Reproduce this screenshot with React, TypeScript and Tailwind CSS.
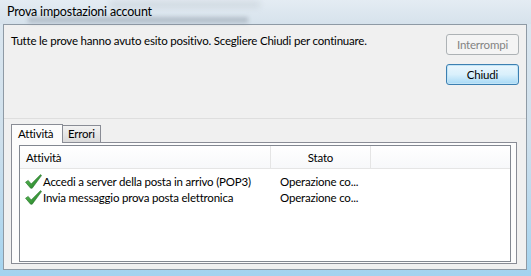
// Vista-style "Prova impostazioni account" dialog

const font = { fontFamily: 'Lato, "Noto Sans", sans-serif' };

type Row = { task: string; status: string };

const rows: Row[] = [
  { task: 'Accedi a server della posta in arrivo (POP3)', status: 'Operazione co...' },
  { task: 'Invia messaggio prova posta elettronica', status: 'Operazione co...' },
];

function Check() {
  return (
    <svg width="17" height="15" viewBox="0 0 17 15" className="shrink-0">
      <defs>
        <linearGradient id="ck" x1="0" y1="0" x2="1" y2="1">
          <stop offset="0" stopColor="#5fc35a" />
          <stop offset="1" stopColor="#1f7a22" />
        </linearGradient>
      </defs>
      <path d="M0.5 8.2 L3.2 6.4 L6.2 10 L15.6 0.6 L16.5 1.6 L7.2 14.2 L5.6 14.2 Z" fill="url(#ck)" stroke="#25702a" strokeWidth="0.6" />
    </svg>
  );
}

function WinButton({ label, disabled, primary }: { label: string; disabled?: boolean; primary?: boolean }) {
  return (
    <button
      className={`w-[73px] h-[21px] rounded-[3px] text-[11.5px] tracking-[-0.2px] leading-none flex items-center justify-center ${
        disabled
          ? 'border border-[#adb2b5] bg-[#f4f4f4] text-[#838383]'
          : primary
          ? 'border border-[#3c7fb1] bg-gradient-to-b from-[#eaf6fd] via-[#d9f0fc] to-[#a7d9f5] text-black shadow-[inset_0_0_0_1px_#c2e4f6]'
          : 'border border-[#707070] bg-gradient-to-b from-[#f2f2f2] to-[#d0d0d0] text-black'
      }`}
      style={font}
    >
      {label}
    </button>
  );
}

export default function App() {
  return (
    <div className="w-[531px] h-[276px] flex flex-col bg-gradient-to-b from-[#dce7f0] via-[#cfe0ec] to-[#a3d3ef] overflow-hidden text-[11.5px] tracking-[-0.2px]" style={font}>
      {/* Title bar */}
      <div className="relative h-[24px] shrink-0 px-[7px] flex items-center bg-gradient-to-b from-[#e4ecf3] to-[#d6e2ec]">
        <div className="absolute left-[28px] top-[17px] w-[220px] h-[6px] bg-[#7d8793]/40 blur-[2px]" />
        <div className="absolute left-[110px] top-[2px] w-[150px] h-[5px] bg-[#9aa6b1]/30 blur-[3px]" />
        <span className="relative text-[12.5px] text-black leading-none pt-[1px]">Prova impostazioni account</span>
      </div>

      {/* Client */}
      <div className="flex-1 flex pl-[3px] pr-[4px] pb-[6px]">
        <div className="flex-1 flex flex-col border border-[#8e9aa5] bg-[#f0f0f0]">
          {/* Top area */}
          <div className="h-[94px] shrink-0 flex pl-[7px] pr-[7px] border-b border-[#dedede]">
            <p className="flex-1 text-black pt-[8px] leading-[16px]">
              Tutte le prove hanno avuto esito positivo. Scegliere Chiudi per continuare.
            </p>
            <div className="flex flex-col gap-[9px] pt-[9px]">
              <WinButton label="Interrompi" disabled />
              <WinButton label="Chiudi" primary />
            </div>
          </div>

          {/* Tabs */}
          <div className="flex-1 flex flex-col pl-[7px] pr-[9px] pt-[5px] pb-[5px]">
            <div className="flex items-end h-[19px] shrink-0 relative z-10">
              <div className="h-[19px] px-[6px] flex items-start pt-[1px] border border-b-0 border-[#898c95] bg-[#fcfcfc] leading-[16px] w-[52px]">
                Attività
              </div>
              <div className="h-[17px] -ml-px mb-px px-[5px] flex items-center border border-b-0 border-[#898c95] bg-gradient-to-b from-[#f2f2f2] to-[#dadada] leading-none w-[39px]">
                Errori
              </div>
            </div>
            <div className="flex-1 -mt-px border border-[#898c95] bg-[#fcfcfc] pl-[7px] pr-[5px] pt-[2px] pb-[1px] flex">
              {/* List */}
              <div className="flex-1 border border-[#828790] bg-white flex flex-col">
                <div className="h-[23px] shrink-0 flex border-b border-[#e5e5e5] bg-gradient-to-b from-white to-[#f7f8fa]">
                  <div className="w-[251px] pl-[6px] pt-[2px] flex items-center border-r border-[#e5e5e5]">Attività</div>
                  <div className="w-[100px] pt-[2px] flex items-center justify-center border-r border-[#e5e5e5]">Stato</div>
                  <div className="flex-1" />
                </div>
                <div className="pt-[4px] flex flex-col">
                  {rows.map((r) => (
                    <div key={r.task} className="h-[16px] flex items-center leading-none">
                      <div className="w-[260px] flex items-center pl-[5px] gap-[1px]">
                        <Check />
                        <span className="whitespace-nowrap pt-[1px]">{r.task}</span>
                      </div>
                      <span className="whitespace-nowrap pt-[1px]">{r.status}</span>
                    </div>
                  ))}
                </div>
              </div>
            </div>
          </div>
        </div>
      </div>
    </div>
  );
}
